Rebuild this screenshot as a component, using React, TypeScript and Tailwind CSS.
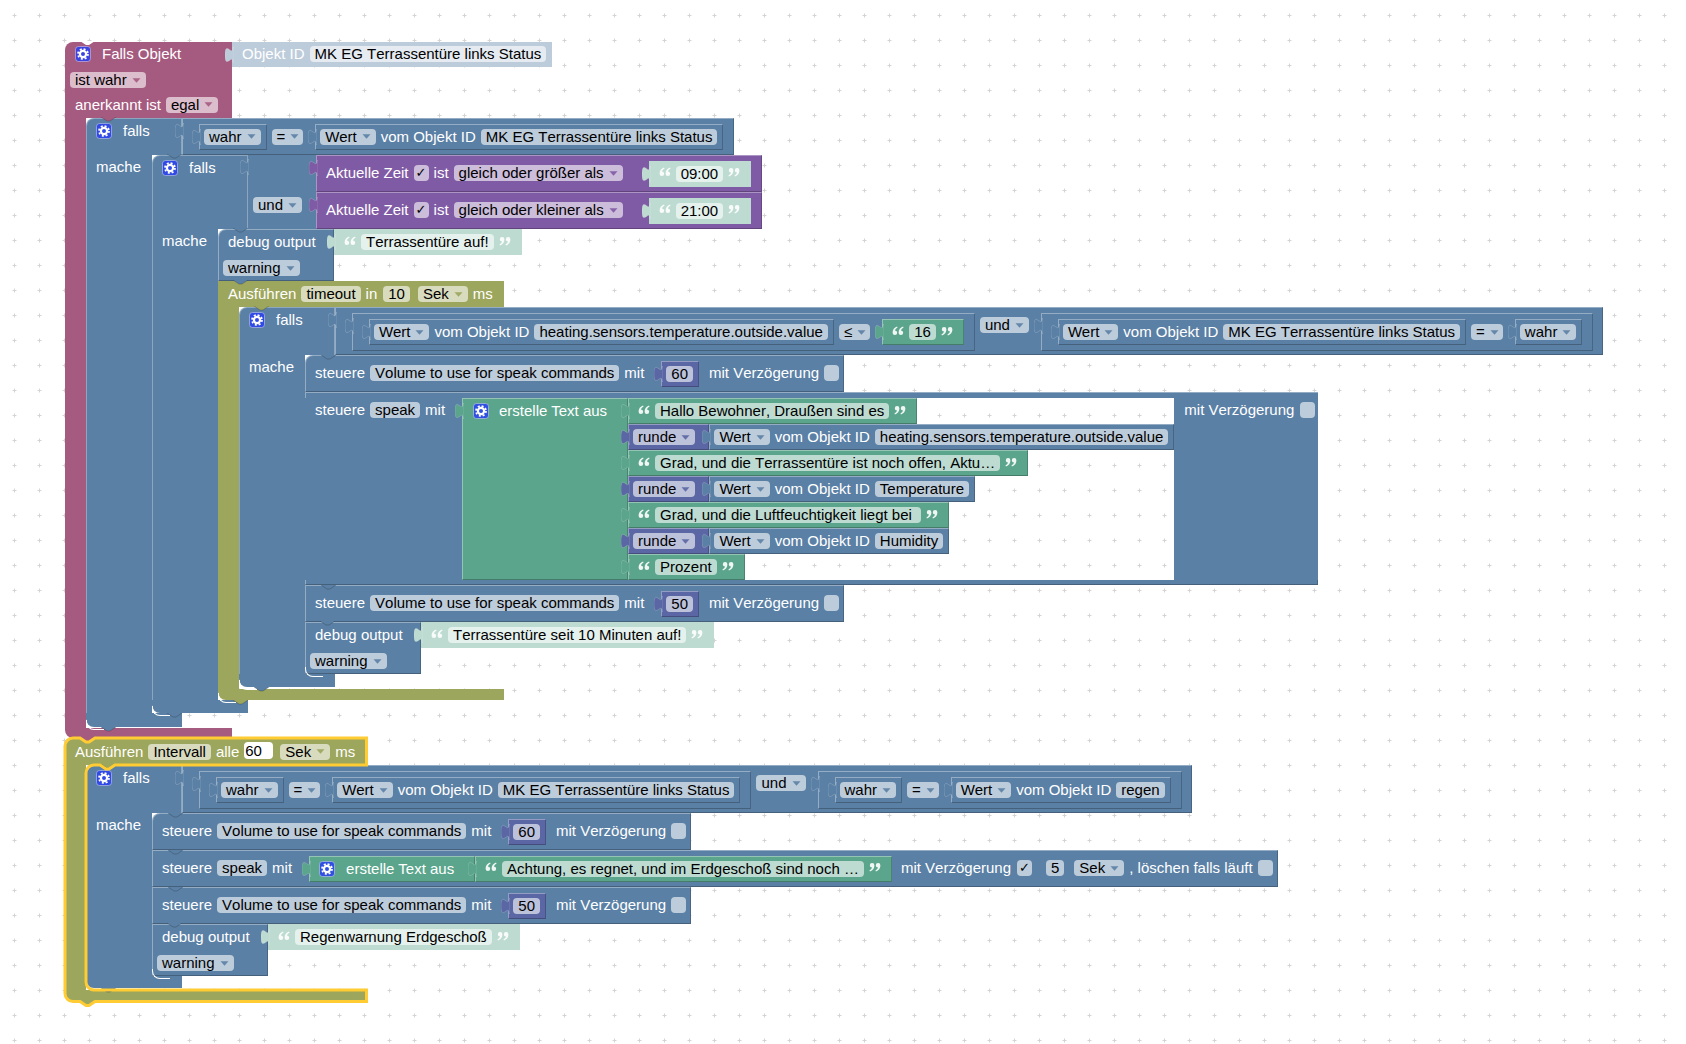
import type { ReactNode } from 'react';

type Tone = { bg: string; fill: string; edge: string };

const EDGE = 'border border-t-white/35 border-l-white/35 border-r-black/20 border-b-black/25';
const FLAT = 'border border-transparent';

const blue: Tone = { bg: 'bg-[#5b80a5]', fill: 'fill-[#5b80a5]', edge: EDGE };
const pink: Tone = { bg: 'bg-[#a55b80]', fill: 'fill-[#a55b80]', edge: EDGE };
const olive: Tone = { bg: 'bg-[#9da65d]', fill: 'fill-[#9da65d]', edge: EDGE };
const purple: Tone = { bg: 'bg-[#805ba5]', fill: 'fill-[#805ba5]', edge: EDGE };
const green: Tone = { bg: 'bg-[#5ba58c]', fill: 'fill-[#5ba58c]', edge: EDGE };
const math: Tone = { bg: 'bg-[#5b67a5]', fill: 'fill-[#5b67a5]', edge: EDGE };
const shadowGreen: Tone = { bg: 'bg-[#bddbd1]', fill: 'fill-[#bddbd1]', edge: FLAT };
const shadowBlue: Tone = { bg: 'bg-[#bdccdb]', fill: 'fill-[#bdccdb]', edge: FLAT };

const ROW = 'h-[26px] gap-[5px] pl-[4px] pr-[5px]';
const STATUS = 'MK EG Terrassentüre links Status';
const TEMP = 'heating.sensors.temperature.outside.value';

const Kern = ({ children }: { children: ReactNode }) => <span className="[font-kerning:normal]">{children}</span>;

const Lbl = ({ children, className = '' }: { children: ReactNode; className?: string }) => (
  <span className={`text-white whitespace-pre ${className}`}>{children}</span>
);

const Pill = ({ children, className = '' }: { children: ReactNode; className?: string }) => (
  <span className={`flex items-center h-[16px] px-[5px] rounded-[4px] bg-white/60 text-black whitespace-pre ${className}`}>{children}</span>
);

const Drop = ({ c, children, className = '', pr = 'pr-[5px]' }: { c: Tone; children: ReactNode; className?: string; pr?: string }) => (
  <span className={`flex items-center gap-[5px] h-[16px] pl-[5px] rounded-[4px] bg-white/60 text-black whitespace-pre ${pr} ${className}`}>
    {children}
    <svg width="9" height="5" viewBox="0 0 9 5" className={`${c.fill} opacity-90`}>
      <path d="M0.5 0.2H8.5L4.5 4.8Z" />
    </svg>
  </span>
);

const Check = ({ on = false, className = '' }: { on?: boolean; className?: string }) => (
  <span className={`flex items-center justify-center w-[15px] h-[16px] rounded-[4px] bg-white/60 text-black text-[13px] font-['DejaVu_Sans',sans-serif] font-bold ${className}`}>
    {on ? '✓' : ''}
  </span>
);

const Gear = () => (
  <svg width="16" height="16" viewBox="0 0 16 16" className="shrink-0">
    <rect x="0.5" y="0.5" width="15" height="15" rx="3" className="fill-[#2a40f0]/85 stroke-white/40" />
    <circle cx="8" cy="8" r="3.1" fill="none" stroke="white" strokeWidth="2.2" />
    <circle cx="8" cy="8" r="5" fill="none" stroke="white" strokeWidth="1.7" strokeDasharray="2 1.93" />
  </svg>
);

const Tab = ({ c, className = '-left-[8px] top-[4px]' }: { c: Tone; className?: string }) => (
  <svg width="9" height="16" viewBox="0 0 9 16" className={`absolute z-10 ${className}`}>
    <path d="M9 15.5H8c0,-10 -8,8 -8,-7.5s8,2.5 8,-7.5H9Z" className={`${c.fill} stroke-white/25`} strokeWidth="0.7" />
  </svg>
);

const Notch = ({ c, className = 'left-[15px] top-0' }: { c: Tone; className?: string }) => (
  <svg width="15" height="5" viewBox="0 0 15 5" className={`absolute z-10 ${className}`}>
    <path d="M0 0L6 4H9L15 0Z" className={c.fill} />
    <path d="M0 0L6 4H9L15 0" fill="none" className="stroke-black/25" strokeWidth="0.8" />
  </svg>
);

const Quote = ({ flip = false }: { flip?: boolean }) => (
  <svg width="12" height="10" viewBox="0 0 12 10" className={`shrink-0 fill-white/90 -mt-[3px] ${flip ? 'rotate-180' : ''}`}>
    <path d="M5 0.5C2.3 1.6 0.6 3.6 0.6 6.8A2.3 2.3 0 1 0 3 4.5C3.2 3.4 4 2.4 5.6 1.5Z" />
    <path d="M11 0.5C8.3 1.6 6.6 3.6 6.6 6.8A2.3 2.3 0 1 0 9 4.5C9.2 3.4 10 2.4 11.6 1.5Z" />
  </svg>
);

const Val = ({ c, className = ROW, ml = 'ml-[12px]', w = 'w-fit', children }: { c: Tone; className?: string; ml?: string; w?: string; children: ReactNode }) => (
  <div className={`relative flex items-center shrink-0 ${w} ${c.bg} ${c.edge} ${ml} ${className}`}>
    <Tab c={c} />
    {children}
  </div>
);

const Str = ({ c = shadowGreen, text, ml }: { c?: Tone; text: string; ml?: string }) => (
  <Val c={c} ml={ml} className="h-[26px] gap-[5px] pl-[9px] pr-[10px]">
    <Quote />
    <Pill>{text}</Pill>
    <Quote flip />
  </Val>
);

const Wert = ({ id, ml }: { id: ReactNode; ml?: string }) => (
  <Val c={blue} ml={ml}>
    <Drop c={blue}><Kern>Wert</Kern></Drop>
    <Lbl>vom Objekt ID</Lbl>
    <Pill>{id}</Pill>
  </Val>
);

const Wahr = () => (
  <Val c={blue}>
    <Drop c={blue}>wahr</Drop>
  </Val>
);

const Compare = ({ h = 'h-[38px]', ml, left, op, right }: { h?: string; ml?: string; left: ReactNode; op: string; right: ReactNode }) => (
  <Val c={blue} ml={ml} className={`${h} pl-[4px] pr-[10px]`}>
    {left}
    <Drop c={blue} pr="pr-[4px]" className="ml-[5px]">{op}</Drop>
    {right}
  </Val>
);

const And = ({ first, second }: { first: ReactNode; second: ReactNode }) => (
  <Val c={blue} ml="" className="h-full items-start pt-[5px] pl-[4px] pr-[9px]">
    {first}
    <Drop c={blue} className="ml-[5px] mt-[4px]">und</Drop>
    {second}
  </Val>
);

const Stmt = ({ notch = blue, first = false, children }: { notch?: Tone; first?: boolean; children: ReactNode }) => (
  <div className={`relative flex items-center gap-[5px] w-fit h-[37px] pl-[9px] pr-[4px] ${blue.bg} ${EDGE} ${first ? 'rounded-tl-lg' : ''}`}>
    <Notch c={notch} className="left-[15px] -top-px" />
    {children}
  </div>
);

const Volume = ({ n, first, notch }: { n: string; first?: boolean; notch?: Tone }) => (
  <Stmt first={first} notch={notch}>
    <Lbl className="-mt-[1px]">steuere</Lbl>
    <Pill className="-mt-[1px]">Volume to use for speak commands</Pill>
    <Lbl className="-mt-[1px]">mit</Lbl>
    <Val c={math}>
      <Pill>{n}</Pill>
    </Val>
    <Lbl className="ml-[5px] -mt-[1px]">mit Verzögerung</Lbl>
    <Check className="-mt-[1px]" />
  </Stmt>
);

const Debug = ({ text, first, notch = blue }: { text: string; first?: boolean; notch?: Tone }) => (
  <div className="relative flex items-start w-fit">
    <Notch c={notch} className="left-[15px] -top-px" />
    <div className={`flex flex-col w-[116px] h-[52px] ${blue.bg} ${EDGE} ${first ? 'rounded-tl-lg' : ''}`}>
      <div className="flex items-center h-[25px] pl-[9px]">
        <Lbl>debug output</Lbl>
      </div>
      <div className="flex items-center h-[26px] pl-[4px]">
        <Drop c={blue} className="mt-[2px]">warning</Drop>
      </div>
    </div>
    <Str text={text} ml="" />
  </div>
);

const Bar = ({ c, width, height, curve, notch = true }: { c: Tone; width: string; height: string; curve: string; notch?: boolean }) => (
  <div className={`relative rounded-bl-lg ${c.bg} ${width} ${height}`}>
    <span className={`absolute z-20 w-[18px] h-[10px] rounded-bl-[8px] border-l-[1.5px] border-b-[1.5px] border-white ${curve}`} />
    {notch && <Notch c={c} className="left-[15px] top-full" />}
  </div>
);

const Falls = ({ notch = blue, headH, head, barH, children }: { notch?: Tone; headH: string; head: ReactNode; barH: string; children: ReactNode }) => (
  <div className="relative flex flex-col w-fit">
    <Notch c={notch} className="left-[15px] -top-px z-30" />
    <div className={`flex items-start ${headH}`}>
      <div className={`flex items-start gap-[11px] w-[96px] h-full pt-[4px] pl-[9px] rounded-tl-lg ${blue.bg} border-t border-l border-r border-white/30`}>
        <Gear />
        <Lbl>falls</Lbl>
      </div>
      {head}
    </div>
    <div className="flex">
      <div className={`w-[66px] shrink-0 pl-[9px] pt-[4px] border-l border-white/30 ${blue.bg}`}>
        <Lbl>mache</Lbl>
      </div>
      <div className="flex flex-col">{children}</div>
    </div>
    <Bar c={blue} width="w-[96px]" height={barH} curve="left-[66px] -top-[7px]" />
  </div>
);

const Runde = ({ id }: { id: ReactNode }) => (
  <div className="flex">
    <Val c={math} ml="" className="h-[26px] pl-[4px] pr-[13px]">
      <Drop c={math}>runde</Drop>
    </Val>
    <Wert ml="" id={id} />
  </div>
);

const SpeakJoin = () => (
  <div className="flex flex-col w-fit">
    <div className={`h-[6px] w-full ${blue.bg} ${EDGE} border-b-0 border-r-0`} />
    <div className="flex items-stretch">
      <div className={`flex items-start gap-[5px] w-[157px] pl-[10px] pt-[4px] ${blue.bg}`}>
        <Lbl>steuere</Lbl>
        <Pill>speak</Pill>
        <Lbl>mit</Lbl>
      </div>
      <div className={`relative w-[166px] h-[182px] flex items-start gap-[10px] pl-[10px] pt-[4px] ${green.bg} ${EDGE}`}>
        <Tab c={green} />
        <Gear />
        <Lbl><Kern>erstelle Text aus</Kern></Lbl>
      </div>
      <div className="flex flex-col">
        <Str c={green} ml="" text="Hallo Bewohner, Draußen sind es" />
        <Runde id={TEMP} />
        <Str c={green} ml="" text="Grad, und die Terrassentüre ist noch offen, Aktu…" />
        <Runde id={<Kern>Temperature</Kern>} />
        <Str c={green} ml="" text="Grad, und die Luftfeuchtigkeit liegt bei " />
        <Runde id="Humidity" />
        <Str c={green} ml="" text="Prozent" />
      </div>
      <div className={`flex items-start gap-[5px] w-[144px] pl-[10px] pt-[4px] ${blue.bg}`}>
        <Lbl>mit Verzögerung</Lbl>
        <Check className="ml-px" />
      </div>
    </div>
    <div className={`h-[5px] w-full ${blue.bg} ${EDGE} border-t-0`} />
  </div>
);

const Timeout = () => (
  <div className="relative flex flex-col w-fit">
    <Notch c={blue} className="left-[15px] -top-px z-30" />
    <div className={`flex items-center gap-[5px] w-[286px] h-[26px] pl-[10px] ${olive.bg}`}>
      <Lbl>Ausführen</Lbl>
      <Pill>timeout</Pill>
      <Lbl>in</Lbl>
      <Pill className="ml-px">10</Pill>
      <Drop c={olive} className="ml-[3px]">Sek</Drop>
      <Lbl>ms</Lbl>
    </div>
    <div className="flex">
      <div className={`w-[21px] shrink-0 ${olive.bg}`} />
      <div className="pb-[2px]">
        <Falls
          notch={olive}
          headH="h-[48px]"
          barH="h-[13px]"
          head={
            <And
              first={
                <Compare
                  left={<Wert id={TEMP} />}
                  op="≤"
                  right={<Str c={green} text="16" />}
                />
              }
              second={
                <Compare
                  left={<Wert id={STATUS} />}
                  op="="
                  right={<Wahr />}
                />
              }
            />
          }
        >
          <Volume first n="60" />
          <SpeakJoin />
          <Volume n="50" />
          <Debug text="Terrassentüre seit 10 Minuten auf!" />
        </Falls>
      </div>
    </div>
    <Bar c={olive} width="w-[286px]" height="h-[11px]" curve="left-[21px] -top-[9px]" />
  </div>
);

const Zeit = ({ op, time }: { op: string; time: string }) => (
  <Val c={purple} ml="" className="h-[37px] gap-[5px] pl-[9px] pr-[10px]">
    <Lbl className="-mt-px"><Kern>Aktuelle Zeit</Kern></Lbl>
    <Check on className="-mt-px" />
    <Lbl className="-mt-px">ist</Lbl>
    <Drop c={purple} className="-mt-px">{op}</Drop>
    <Str text={time} ml="ml-[21px]" />
  </Val>
);

const FirstStack = () => (
  <div className="absolute left-[65px] top-[42px] flex flex-col w-fit">
    <div className="flex items-start">
      <div className={`relative flex items-center gap-[11px] w-[167px] h-[25px] pl-[10px] pb-[2px] rounded-tl-lg ${pink.bg}`}>
        <svg width="15" height="5" viewBox="0 0 15 5" className="absolute left-[15px] -top-px fill-white">
          <path d="M0 0L6 4H9L15 0Z" />
        </svg>
        <Gear />
        <Lbl>Falls Objekt</Lbl>
      </div>
      <Val c={shadowBlue} ml="" className="h-[25px] gap-[5px] pl-[9px] pr-[5px] pb-[2px]">
        <Lbl>Objekt ID</Lbl>
        <Pill>{STATUS}</Pill>
      </Val>
    </div>
    <div className={`flex items-center w-[167px] h-[26px] pl-[5px] ${pink.bg}`}>
      <Drop c={pink}>ist wahr</Drop>
    </div>
    <div className={`flex items-center gap-[5px] w-[167px] h-[25px] pl-[10px] pb-[2px] ${pink.bg}`}>
      <Lbl>anerkannt ist</Lbl>
      <Drop c={pink}>egal</Drop>
    </div>
    <div className="flex">
      <div className={`w-[21px] shrink-0 ${pink.bg}`} />
      <div className="pb-px">
        <Falls
          notch={pink}
          headH="h-[37px]"
          barH="h-[14px]"
          head={
            <Compare
              h="h-[37px]"
              ml=""
              left={<Wahr />}
              op="="
              right={<Wert id={STATUS} />}
            />
          }
        >
          <Falls
            headH="h-[74px]"
            barH="h-[13px]"
            head={
              <>
                <div className={`relative w-[68px] h-full pt-[42px] pl-[5px] ${blue.bg}`}>
                  <Tab c={blue} />
                  <Drop c={blue} className="w-fit">und</Drop>
                </div>
                <div className="flex flex-col">
                  <Zeit op="gleich oder größer als" time="09:00" />
                  <Zeit op="gleich oder kleiner als" time="21:00" />
                </div>
              </>
            }
          >
            <Debug first text="Terrassentüre auf!" />
            <Timeout />
          </Falls>
        </Falls>
      </div>
    </div>
    <Bar c={pink} width="w-[167px]" height="h-[10px]" curve="left-[21px] -top-[8px]" notch={false} />
  </div>
);

const SecondStack = () => (
  <div className="absolute left-[65px] top-[738px] flex flex-col w-fit z-10">
    <div className={`relative flex items-center gap-[5px] w-[302px] h-[27px] pl-[10px] rounded-tl-lg ${olive.bg}`}>
      <Notch c={pink} className="left-[15px] top-0" />
      <Lbl>Ausführen</Lbl>
      <Pill>Intervall</Pill>
      <Lbl>alle</Lbl>
      <span className="flex items-center h-[17px] w-[29px] pl-[1px] -mt-[2px] rounded-[4px] bg-white text-black">60</span>
      <Drop c={olive} className="ml-[2px]">Sek</Drop>
      <Lbl>ms</Lbl>
    </div>
    <div className="flex">
      <div className={`w-[21px] shrink-0 ${olive.bg}`} />
      <div className="pb-[2px]">
        <Falls
          notch={olive}
          headH="h-[48px]"
          barH="h-[12px]"
          head={
            <And
              first={
                <Compare
                  left={<Wahr />}
                  op="="
                  right={<Wert id={STATUS} />}
                />
              }
              second={
                <Compare
                  left={<Wahr />}
                  op="="
                  right={<Wert id="regen" />}
                />
              }
            />
          }
        >
          <Volume first n="60" />
          <Stmt>
            <Lbl className="-mt-px">steuere</Lbl>
            <Pill className="-mt-px">speak</Pill>
            <Lbl className="-mt-px">mit</Lbl>
            <div className="flex">
              <Val c={green} w="w-[166px]" className="h-[26px] gap-[11px] pl-[9px]">
                <Gear />
                <Lbl><Kern>erstelle Text aus</Kern></Lbl>
              </Val>
              <Str c={green} ml="" text="Achtung, es regnet, und im Erdgeschoß sind noch …" />
            </div>
            <Lbl className="ml-[4px] -mt-px">mit Verzögerung</Lbl>
            <Check on className="ml-px -mt-px" />
            <Pill className="ml-[9px] -mt-px">5</Pill>
            <Drop c={blue} className="ml-[5px] -mt-px">Sek</Drop>
            <Lbl className="-mt-px">, löschen falls läuft</Lbl>
            <Check className="-mt-px" />
          </Stmt>
          <Volume n="50" />
          <Debug text="Regenwarnung Erdgeschoß" />
        </Falls>
      </div>
    </div>
    <Bar c={olive} width="w-[302px]" height="h-[12px]" curve="hidden" />
  </div>
);

export default function App() {
  return (
    <div className="relative w-[1686px] h-[1044px] overflow-hidden bg-white text-[15px] leading-[16px] [font-kerning:none] font-['Liberation_Sans',Arial,sans-serif]">
      {/* workspace grid */}
      <svg width="1686" height="1044" className="absolute inset-0">
        <defs>
          <pattern id="grid" width="25" height="25" patternUnits="userSpaceOnUse" x="2" y="3">
            <path d="M10.5 12.5h4M12.5 10.5v4" stroke="#d4d4d4" strokeWidth="1" />
          </pattern>
        </defs>
        <rect width="1686" height="1044" fill="url(#grid)" />
      </svg>

      <FirstStack />
      <SecondStack />

      {/* selected block outline */}
      <svg width="1686" height="1044" className="absolute inset-0 z-20 pointer-events-none">
        <path
          d="M65 746a8 8 0 0 1 8-8H80l6 4h3l6-4H366.5V765H115l-6 4h-3l-6-4H94a8 8 0 0 0-8 8V982a8 8 0 0 0 8 8H366.5V1001.5H95l-6 4h-3l-6-4H73a8 8 0 0 1-8-8Z"
          fill="none"
          stroke="#fc3"
          strokeWidth="3"
        />
      </svg>
    </div>
  );
}
